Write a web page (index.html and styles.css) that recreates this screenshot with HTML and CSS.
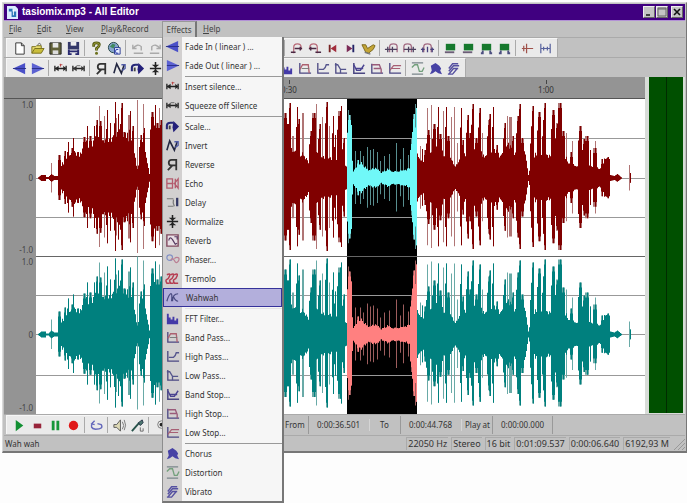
FILE: index.html
```html
<!DOCTYPE html>
<html lang="en">
<head>
<meta charset="utf-8">
<title>tasiomix.mp3 - All Editor</title>
<link rel="stylesheet" href="styles.css">
</head>
<body>
<svg class="sprite" aria-hidden="true">
  <symbol id="new" viewBox="0 0 16 16"><path d="M4 2h6l3 3v9H4z" fill="#fff" stroke="#333"/><path d="M10 2v3h3" fill="none" stroke="#333"/></symbol>
  <symbol id="open" viewBox="0 0 16 16"><path d="M2 13V6h4l1-1h5v3" fill="#e8dc70" stroke="#77701c"/><path d="M2 13l3-5h10l-3 5z" fill="#c9bd3c" stroke="#77701c"/><path d="M8 4q2-3 4 0" fill="none" stroke="#555"/></symbol>
  <symbol id="save" viewBox="0 0 16 16"><path d="M2 2h12v12H2z" fill="#62623a" stroke="#222"/><path d="M5 2h6v5H5z" fill="#e8e8e8"/><path d="M5 10h6v4H5z" fill="#ddd"/></symbol>
  <symbol id="saveas" viewBox="0 0 16 16"><path d="M2 1h12v8H2z" fill="#333768"/><path d="M5 1h6v4H5z" fill="#eee"/><path d="M3 11h10M3 9v5h3M13 9v5h-3" stroke="#292a70" stroke-width="2" fill="none"/></symbol>
  <symbol id="help" viewBox="0 0 16 16"><path d="M5 6V4q0-2 3-2t3 2q0 2-3 4v2" fill="none" stroke="#555a16" stroke-width="3"/><path d="M5 5V4q0-2 3-2t3 2q0 2-3 4v2" fill="none" stroke="#a4a83a"/><circle cx="8" cy="13" r="1.6" fill="#6d721e"/></symbol>
  <symbol id="globe" viewBox="0 0 16 16"><circle cx="7" cy="7" r="5.5" fill="#86a4cc" stroke="#244"/><path d="M3 6l3-3 3 1-2 4z" fill="#3f8a5e"/><path d="M8 7h6v7H8z" fill="#e6edff" stroke="#2b3c92"/><path d="M12 9q-3-1-3 2t3 2" fill="none" stroke="#1d2fa8"/></symbol>
  <symbol id="undo" viewBox="0 0 16 16"><path d="M3 4v4h4M3 8q5-6 9-2v4M4 13h10" fill="none" stroke="#aaa" stroke-width="1.5"/></symbol>
  <symbol id="redo" viewBox="0 0 16 16"><path d="M13 4v4H9M13 8q-5-6-9-2v4M2 13h10" fill="none" stroke="#aaa" stroke-width="1.5"/></symbol>
  <symbol id="jumpl" viewBox="0 0 16 16"><path d="M5 13V7q0-4 4-4t4 4v2" fill="none" stroke="#b86a78" stroke-width="1.3"/><path d="M2 12h5M6 8h8M12 6v4" stroke="#4b2944" stroke-width="1.5"/></symbol>
  <symbol id="jumpr" viewBox="0 0 16 16"><path d="M11 13V7q0-4-4-4T3 7v2" fill="none" stroke="#b86a78" stroke-width="1.3"/><path d="M9 12h6M2 8h8M4 6v4" stroke="#4b2944" stroke-width="1.5"/></symbol>
  <symbol id="start" viewBox="0 0 16 16"><path d="M5 4v8" stroke="#722" stroke-width="2"/><path d="M12 4v8L6 8z" fill="#a22c3c"/></symbol>
  <symbol id="end" viewBox="0 0 16 16"><path d="M11 4v8" stroke="#226" stroke-width="2"/><path d="M4 4v8l6-4z" fill="#7b2a56"/></symbol>
  <symbol id="marker" viewBox="0 0 16 16"><path d="M1 4h4l2 4 6-4 2 1-2 4-5 4-3-1z" fill="#c4a536" stroke="#7a681d"/><path d="M4 12l6 2" stroke="#7a7a7a" stroke-width="1.5"/></symbol>
  <symbol id="bracl" viewBox="0 0 16 16"><path d="M6 12V6q0-3 4-3t4 3v6" fill="none" stroke="#a36b83" stroke-width="1.4"/><path d="M1 9h13M4 6v6M9 6v6" stroke="#4d405f" stroke-width="1.4"/></symbol>
  <symbol id="bracr" viewBox="0 0 16 16"><path d="M2 12V6q0-3 4-3t4 3v6" fill="none" stroke="#a36b83" stroke-width="1.4"/><path d="M2 9h13M7 6v6M12 6v6" stroke="#4d405f" stroke-width="1.4"/></symbol>
  <symbol id="brac" viewBox="0 0 16 16"><path d="M4 12V6q0-3 4-3t4 3v6" fill="none" stroke="#a36b83" stroke-width="1.4"/><path d="M1 9h4M11 9h4M3 7v5M13 7v5M8 6v6" stroke="#46407b" stroke-width="1.4"/></symbol>
  <symbol id="flag" viewBox="0 0 16 16"><path d="M3 3h10v7H3z" fill="#16792d"/><path d="M2 12h10" stroke="#6c5e77" stroke-width="2"/></symbol>
  <symbol id="flag2" viewBox="0 0 16 16"><path d="M3 3h10v7H3z" fill="#16792d"/><path d="M4 10v3H2M12 10v3h2" fill="none" stroke="#4d4f80" stroke-width="2"/></symbol>
  <symbol id="cutl" viewBox="0 0 16 16"><path d="M2 8h12M7 3v10M4 5v6" stroke="#a0524b" stroke-width="1.3"/></symbol>
  <symbol id="cutb" viewBox="0 0 16 16"><path d="M3 3v10M13 3v10M3 8h10M6 6v4M10 6v4" stroke="#59639e" stroke-width="1.3"/></symbol>
  <symbol id="fadein" viewBox="0 0 16 16"><path d="M1 8l13-6v12z" fill="#4a50c8"/><path d="M1 8h14" stroke="#292e88"/></symbol>
  <symbol id="fadeout" viewBox="0 0 16 16"><path d="M15 8L2 2v12z" fill="#5c62d2"/><path d="M2 8h13" stroke="#292e88"/></symbol>
  <symbol id="insert" viewBox="0 0 16 16"><path d="M2 5v6M14 5v6M2 8h12" stroke="#222" stroke-width="1.4"/><path d="M2 8l4-3v6zM14 8l-3-3v6z" fill="#222"/><path d="M7 4h3M8 3v3" stroke="#b44" /></symbol>
  <symbol id="squeeze" viewBox="0 0 16 16"><path d="M2 5v6M14 5v6M2 8h12" stroke="#222" stroke-width="1.4"/><path d="M2 8l4-3v6zM14 8l-3-3v6z" fill="#333"/><path d="M6 5h4" stroke="#666"/></symbol>
  <symbol id="scale" viewBox="0 0 16 16"><path d="M2 11V7q0-3 4-3h3" fill="none" stroke="#262878" stroke-width="2.2"/><path d="M9 2l6 6-6 6-1-5z" fill="#24207a"/><path d="M5 7v4" stroke="#444" stroke-width="2"/></symbol>
  <symbol id="invert" viewBox="0 0 16 16"><path d="M2 13L5 3l5 10 3-9" fill="none" stroke="#222640" stroke-width="1.7"/><path d="M10 4h4v4l-3 2" fill="none" stroke="#505ba7" stroke-width="1.4"/></symbol>
  <symbol id="reverse" viewBox="0 0 16 16"><path d="M12 14V3H7Q4 3 4 6t3 3h5M8 9l-5 5" fill="none" stroke="#333" stroke-width="1.9"/></symbol>
  <symbol id="echo" viewBox="0 0 16 16"><path d="M2 3h6v10H2zM2 8h7M14 3l-4 5 4 5zM11 3v10" fill="none" stroke="#b45b6d" stroke-width="1.4"/></symbol>
  <symbol id="delay" viewBox="0 0 16 16"><path d="M2 4h7M3 12h6M9 5q-1 4 1 7" fill="none" stroke="#777" stroke-width="1.3"/><path d="M13 3v9" stroke="#333763" stroke-width="2.4"/></symbol>
  <symbol id="normalize" viewBox="0 0 16 16"><path d="M2 8h12M8 1v14" stroke="#222" stroke-width="1.6"/><path d="M4 4h8L8 7zM4 12h8L8 9z" fill="#222"/></symbol>
  <symbol id="reverb" viewBox="0 0 16 16"><path d="M2 2h12v12H2z" fill="#e8dfe5" stroke="#814b60" stroke-width="1.5"/><path d="M4 8q1-5 4-1l3 5 2-1M10 4h3v3" fill="none" stroke="#55385f" stroke-width="1.3"/></symbol>
  <symbol id="phaser" viewBox="0 0 16 16"><circle cx="5" cy="6" r="3" fill="none" stroke="#8190c4" stroke-width="1.3"/><path d="M6 9q2-4 4 0t4 1 0-4-4 1" fill="none" stroke="#ba7e92" stroke-width="1.3"/></symbol>
  <symbol id="tremolo" viewBox="0 0 16 16"><path d="M2 4q4-2 3 1t-3 4 0 4h3M6 4q4-2 3 1t-3 4 0 4h3M10 4q4-2 3 1t-3 4 0 4h4" fill="none" stroke="#b63e52" stroke-width="1.6"/></symbol>
  <symbol id="wahwah" viewBox="0 0 16 16"><path d="M2 12Q4 5 6 4t1 8M8 12q0-8 6-8M9 7q2 5 5 5" fill="none" stroke="#494a81" stroke-width="1.3"/></symbol>
  <symbol id="fft" viewBox="0 0 16 16"><path d="M2 3h2v4h2v2h2V6h2v4h2V8h2v6H2z" fill="#443aa8"/></symbol>
  <symbol id="bandpass" viewBox="0 0 16 16"><path d="M3 2v11h12" fill="none" stroke="#4b4782" stroke-width="1.4"/><path d="M3 9l3-5h6l1 9" fill="none" stroke="#ad6070" stroke-width="1.4"/><path d="M5 8h8" stroke="#777"/></symbol>
  <symbol id="highpass" viewBox="0 0 16 16"><path d="M3 2v11h12" fill="none" stroke="#4b4782" stroke-width="1.4"/><path d="M4 9h5q2-1 3-5h3" fill="none" stroke="#55558d" stroke-width="1.4"/></symbol>
  <symbol id="lowpass" viewBox="0 0 16 16"><path d="M3 2v11h12" fill="none" stroke="#4b4782" stroke-width="1.4"/><path d="M2 4h3l3 5h6M8 9v4" fill="none" stroke="#55558d" stroke-width="1.4"/></symbol>
  <symbol id="bandstop" viewBox="0 0 16 16"><path d="M3 2v11h12" fill="none" stroke="#4b4782" stroke-width="1.6"/><path d="M3 4l3 6h4l4-6M5 8h8" fill="none" stroke="#4a4391" stroke-width="1.5"/></symbol>
  <symbol id="highstop" viewBox="0 0 16 16"><path d="M3 3v10h12" fill="none" stroke="#4b4782" stroke-width="1.4"/><path d="M3 4h8l2 5v4M5 8h8" fill="none" stroke="#9a5b7a" stroke-width="1.4"/></symbol>
  <symbol id="lowstop" viewBox="0 0 16 16"><path d="M3 2v11h12" fill="none" stroke="#4b4782" stroke-width="1.4"/><path d="M3 10l4-5h8M5 8h9" fill="none" stroke="#a75f74" stroke-width="1.3"/></symbol>
  <symbol id="chorus" viewBox="0 0 16 16"><path d="M3 5l5-3 4 3 2 3-1 2 2 4-4-1-3-2-3 2-3 1 2-4z" fill="#4742a5"/></symbol>
  <symbol id="distortion" viewBox="0 0 16 16"><path d="M2 2h12M2 14h12" stroke="#7a858a" stroke-width="1.2"/><path d="M2 7l3-3h3l2 7h3l2-4" fill="none" stroke="#73a07c" stroke-width="1.4"/></symbol>
  <symbol id="vibrato" viewBox="0 0 16 16"><path d="M3 8l4-5h6M3 11l5-6h6M3 14l5-6h5M2 14h5l5-6" fill="none" stroke="#5550a0" stroke-width="1.5"/></symbol>
  <symbol id="play" viewBox="0 0 16 16"><path d="M4 2v12l8-6z" fill="#129033"/></symbol>
  <symbol id="stop" viewBox="0 0 16 16"><path d="M4 6h8v5H4z" fill="#97243a"/></symbol>
  <symbol id="pause" viewBox="0 0 16 16"><path d="M4 3h3v10H4zM9 3h3v10H9z" fill="#16963a"/></symbol>
  <symbol id="rec" viewBox="0 0 16 16"><circle cx="8" cy="8" r="5" fill="#e01818"/></symbol>
  <symbol id="loop" viewBox="0 0 16 16"><path d="M4 5q-4 6 3 7 9 0 6-5l-4-1M6 3L3 6l3 1" fill="none" stroke="#6468bb" stroke-width="1.5"/></symbol>
  <symbol id="speaker" viewBox="0 0 16 16"><path d="M2 7h3l4-5v12L5 10H2z" fill="#ddd9b5" stroke="#555"/><path d="M11 4q3 4 0 8M13 2q3 6 0 11" fill="none" stroke="#777"/></symbol>
  <symbol id="mic" viewBox="0 0 16 16"><path d="M2 14l8-9" stroke="#27524a" stroke-width="2"/><path d="M9 5l4-3 1 3-3 3z" fill="#4d7770" stroke="#234"/><path d="M11 10v4h3v-3" fill="none" stroke="#666"/></symbol>
  <symbol id="zoom" viewBox="0 0 16 16"><circle cx="9" cy="7" r="4" fill="none" stroke="#777"/><circle cx="9" cy="7" r="2" fill="#222"/></symbol>
</svg>

<main class="window">
  <header class="titlebar">
    <svg class="logo" viewBox="0 0 12 14" aria-hidden="true"><path d="M0 0h9l3 3v11H0z" fill="#dcecff"/><path d="M2 3h4v3H2zM5 6h5v6H5z" fill="#2b77b8"/><path d="M7 4v6" stroke="#fff"/></svg>
    <h1>tasiomix.mp3 - All Editor</h1>
    <div class="controls">
      <button aria-label="Minimize"><svg viewBox="0 0 10 10"><path d="M2 8h4" stroke="#222" stroke-width="1.6"/></svg></button>
      <button aria-label="Maximize"><svg viewBox="0 0 10 10"><path d="M1 1h8v8H1zM1 2h8" fill="none" stroke="#666"/></svg></button>
      <button class="close" aria-label="Close"><svg viewBox="0 0 10 10"><path d="M2 2l6 6M8 2L2 8" stroke="#111" stroke-width="1.6"/></svg></button>
    </div>
  </header>

  <nav class="menubar" aria-label="Main menu">
    <button class="m-file"><u>F</u>ile</button>
    <button class="m-edit"><u>E</u>dit</button>
    <button class="m-view"><u>V</u>iew</button>
    <button class="m-play"><u>P</u>lay&amp;Record</button>
    <div class="open-menu">
      <button class="effects" aria-expanded="true">Effects</button>
      <div class="dropdown" id="effects-menu" role="menu"></div>
    </div>
    <button class="m-help"><u>H</u>elp</button>
  </nav>

  <div class="band"><div class="toolbar" role="toolbar" aria-label="Standard" data-icons="new open save saveas | help globe | undo redo save new | zoom zoom | start end | jumpl jumpr start end marker | bracl bracr brac | flag flag flag2 flag2 | cutl cutb"></div></div>
  <div class="band"><div class="toolbar" role="toolbar" aria-label="Effects" data-icons="fadein fadeout | insert squeeze | reverse invert scale normalize echo delay | reverb phaser tremolo wahwah fft bandpass highpass lowpass bandstop highstop lowstop | distortion chorus vibrato"></div></div>

  <section class="editor">
    <div class="view">
      <div class="ruler"><span class="half">0:30</span><span class="full">1:00</span></div>
      <div class="axis"><span>1.0</span><span>0</span><span>-1.0</span></div>
      <div class="axis"><span>1.0</span><span>0</span><span>-1.0</span></div>
      <svg class="wave" id="wave" viewBox="36 99 609 315" preserveAspectRatio="none" role="img" aria-label="Stereo waveform"></svg>
    </div>
    <div class="meter"><span></span><span></span></div>
  </section>

  <div class="band transport">
    <div class="toolbar" role="toolbar" aria-label="Transport" data-icons="play stop pause rec | loop | speaker mic | zoom zoom zoom zoom zoom zoom zoom"></div>
    <div class="times">
      <span class="name">From</span><output>0:00:36.501</output>
      <span class="name to">To</span><output>0:00:44.768</output>
      <span class="name">Play at</span><output>0:00:00.000</output>
    </div>
  </div>

  <footer class="status">
    <span class="hint">Wah wah</span>
    <span>22050 Hz</span><span>Stereo</span><span>16 bit</span><span>0:01:09.537</span><span>0:00:06.640</span><span>6192,93 M</span>
    <svg class="grip" viewBox="0 0 12 12" aria-hidden="true"><path d="M1 12L12 1M5 12l7-7M9 12l3-3" stroke="#999"/></svg>
  </footer>
</main>
<script src="app.js"></script>
</body>
</html>
```
FILE: styles.css
```css
* { box-sizing: border-box; }

html { background: #fdfdfd; }

body {
  min-height: 100vh;
  margin: 0;
  padding: 2px 0 0 2px;
  color: #333;
  font: 8px/12px "Noto Sans", "DejaVu Sans", sans-serif;
}

button {
  margin: 0;
  padding: 0;
  border: 0;
  background: none;
  color: inherit;
  font: inherit;
}

svg { display: block; }
.sprite { position: absolute; width: 0; height: 0; }

.window {
  padding: 1px 1px 0;
  border: 1px solid #d8d8d8;
  border-right-color: #777;
  border-bottom: 2px solid #777;
  background: #c1c1c1;
}

.titlebar {
  display: flex;
  align-items: center;
  height: 17px;
  padding: 0 2px 0 3px;
  border-bottom: 1px solid #b391d6;
  background: #400080;
  color: #fff;
}
.logo { width: 11px; height: 13px; }
.titlebar h1 {
  flex: 1;
  margin: 0 0 0 4px;
  font: bold 10px/14px "Liberation Sans", sans-serif;
}
.controls { display: flex; gap: 1px; }
.controls button {
  width: 12px;
  height: 12px;
  border: 1px solid #eee;
  border-color: #eee #666 #666 #eee;
  background: #c4c4c4;
}
.controls .close { margin-left: 2px; }

.menubar {
  display: flex;
  height: 16px;
  padding-left: 5px;
  color: #444;
}
.menubar > button { text-align: left; white-space: nowrap; }
.m-file { width: 28px; }
.m-edit { width: 29px; }
.m-view { width: 35px; }
.m-play { width: 61px; }
.open-menu { position: relative; width: 41px; }
.effects {
  width: 35px;
  height: 16px;
  border: 1px solid #999;
  border-right: 2px solid #777;
  border-bottom: 0;
  background: #c9c9c9;
}

.dropdown {
  position: absolute;
  z-index: 2;
  top: 16px;
  left: 0;
  width: 122px;
  border: 1px solid #8d8d8d;
  border-top: 0;
  border-right: 2px solid #777;
  border-bottom: 2px solid #777;
  background: linear-gradient(90deg, #d2d0d0 19px, #f6f6f6 19px);
}
.dropdown button {
  display: grid;
  grid-template-columns: 19px 1fr;
  align-items: center;
  column-gap: 3px;
  width: 100%;
  height: 19px;
  border: 1px solid transparent;
  border-left: 0;
  color: #333;
  text-align: left;
  white-space: nowrap;
}
.dropdown button svg { width: 15px; height: 15px; margin-left: 2px; }
.dropdown .selected { border: 1px solid #35329a; background: #b3afdc; }
.dropdown .selected svg { margin-left: 1px; }
.dropdown hr {
  height: 2px;
  margin: 0 0 0 22px;
  border: 0;
  border-bottom: 1px solid #999;
}
.dropdown hr.faint { border-color: #e4e4e4; }

.band {
  display: flex;
  height: 20px;
  padding-left: 2px;
  border-top: 1px solid #aaa;
}
.toolbar {
  display: flex;
  align-items: center;
  height: 19px;
  padding: 0 3px;
  border: 1px solid #f6f6f6;
  border-width: 1px 0 0 1px;
  border-right: 1px solid #aaa;
  background: #eaeaea;
}
.toolbar button {
  display: grid;
  place-items: center;
  width: 18px;
  height: 17px;
}
.toolbar button svg { width: 15px; height: 15px; }
.toolbar i {
  width: 1px;
  height: 16px;
  margin: 0 2px;
  background: #aaa;
}

.editor { display: flex; }
.view {
  flex: 1;
  display: grid;
  grid-template: 22px 157px 158px / 32px 1fr;
  background: #949494;
}
.ruler {
  grid-column: 1 / 3;
  display: grid;
  grid-template-columns: 265fr 40px 217fr 40px 79fr;
  border-bottom: 1px solid #555;
  color: #333;
  text-align: center;
}
.ruler span { padding-top: 6px; line-height: 14px; background: linear-gradient(#444, #444) 50% 3px / 1px 4px no-repeat; }
.half { grid-column: 2; }
.full { grid-column: 4; }
.axis {
  grid-column: 1;
  display: flex;
  flex-direction: column;
  justify-content: space-between;
  align-items: flex-end;
  padding-right: 3px;
  color: #444;
}
.wave {
  grid-area: 2 / 2 / 4 / 3;
  width: 100%;
  height: 315px;
  background: #fff;
}
.grid { stroke: #999; stroke-width: 1; }
.middle { stroke: #666; stroke-width: 1; }

.meter {
  display: flex;
  gap: 1px;
  width: 40px;
  padding: 0 2px 1px 4px;
  background: #d8dcd8;
}
.meter span { flex: 1; background: #005000; }
.meter span + span { box-shadow: -1px 0 #002c00; }

.transport { height: 21px; }
.times { display: flex; align-items: center; }
.times output {
  width: 61px;
  padding-left: 8px;
  border-left: 1px solid #999;
  line-height: 18px;
}
.times .name { width: 31px; padding-left: 3px; border-left: 1px solid #d5d5d5; white-space: nowrap; }
.times .name:first-child { width: 27px; }
.times output:last-child { border-right: 1px solid #999; }
.times .to { padding-left: 10px; }

.status {
  display: flex;
  align-items: center;
  gap: 3px;
  height: 16px;
  border-top: 1px solid #aaa;
}
.status span {
  padding: 0 1px;
  border-left: 1px solid #aaa;
  border-top: 1px solid #aaa;
  font-size: 9px;
  white-space: nowrap;
}
.status .hint { flex: 1; border: 0; font-size: 8px; }
.grip { width: 12px; height: 12px; }
```
FILE: app.js
```js
const icon = id => `<svg aria-hidden="true"><use href="#${id}"/></svg>`;

document.querySelectorAll('[data-icons]').forEach(bar => {
  bar.innerHTML = bar.dataset.icons.split(' ')
    .map(id => id === '|' ? '<i></i>' : `<button aria-label="${id}">${icon(id)}</button>`)
    .join('');
});

const items = [
  ['fadein', 'Fade In ( linear ) ...'], ['fadeout', 'Fade Out ( linear ) ...'], '-',
  ['insert', 'Insert silence...'], ['squeeze', 'Squeeze off Silence'], '-',
  ['scale', 'Scale...'], ['invert', 'Invert'], ['reverse', 'Reverse'], ['echo', 'Echo'],
  ['delay', 'Delay'], ['normalize', 'Normalize'], ['reverb', 'Reverb'], ['phaser', 'Phaser...'],
  ['tremolo', 'Tremolo'], ['wahwah', 'Wahwah'], '~',
  ['fft', 'FFT Filter...'], ['bandpass', 'Band Pass...'], ['highpass', 'High Pass...'],
  ['lowpass', 'Low Pass...'], ['bandstop', 'Band Stop...'], ['highstop', 'High Stop...'],
  ['lowstop', 'Low Stop...'], '-',
  ['chorus', 'Chorus'], ['distortion', 'Distortion'], ['vibrato', 'Vibrato']
];
document.getElementById('effects-menu').innerHTML = items.map(item => {
  if (item === '-') return '<hr>';
  if (item === '~') return '<hr class="faint">';
  const state = item[0] === 'wahwah' ? ' class="selected"' : '';
  return `<button role="menuitem"${state}>${icon(item[0])}<span>${item[1]}</span></button>`;
}).join('');

// Continuous body of the sound: time position, half height.
const body = [
  [37, 0], [41, 3], [45, 3], [46, 1], [48, 1], [51, 4], [54, 2], [57, 2], [58, 10], [62, 14], [68, 20],
  [74, 24], [80, 23], [86, 28], [92, 30], [98, 30], [104, 34], [110, 32], [114, 38], [120, 42],
  [128, 40], [132, 34], [135, 18], [137, 8], [139, 14], [144, 32], [147, 16], [149, 4], [150, 42], [162, 45],
  [180, 30], [200, 36], [220, 28], [240, 35], [265, 30], [283, 32], [290, 30], [296, 24], [303, 22], [308, 15],
  [311, 22], [316, 28], [325, 18], [330, 18], [338, 16], [343, 13], [346, 11],
  [348, 30], [351, 30], [353, 6], [357, 13], [361, 14], [367, 8], [376, 9], [381, 5], [387, 8], [394, 6],
  [402, 7], [409, 9], [412, 16], [417, 22],
  [419, 18], [424, 16], [428, 24], [434, 32], [441, 24], [449, 20], [455, 11], [462, 20], [468, 24],
  [476, 27], [484, 22], [490, 27], [500, 22], [508, 30], [516, 23], [525, 24], [528, 3], [531, 18],
  [538, 24], [545, 22], [552, 20], [562, 26], [567, 16], [576, 11], [584, 20], [592, 10], [600, 9],
  [604, 18], [609, 18], [610, 3], [614, 2], [617, 4], [622, 0], [645, 0]
];

// Peaks: position, half height, width, faint (1) or solid (0).
const peaks = [
  [51, 15, 1, 1], [59, 23, 3, 0], [65, 27, 2, 0], [68, 36, 1, 0], [72, 30, 3, 0], [73, 40, 1, 0], [78, 26, 2, 0],
  [84, 41, 3, 0], [87, 52, 1, 0], [90, 42, 3, 0], [94, 52, 1, 0], [97, 58, 2, 0], [99, 72, 1, 1], [100, 57, 3, 0],
  [104, 62, 1, 1], [107, 68, 1, 0], [110, 55, 1, 0], [115, 76, 1, 0], [116, 60, 2, 1], [118, 64, 1, 0], [122, 75, 2, 0],
  [124, 46, 3, 0], [129, 63, 2, 1], [130, 67, 1, 0], [133, 52, 2, 0], [137, 78, 1, 1], [141, 43, 2, 0], [143, 74, 1, 1],
  [144, 50, 2, 0], [152, 66, 3, 0], [155, 73, 1, 0], [157, 55, 5, 0], [159, 70, 1, 1], [161, 58, 3, 0],
  [170, 60, 4, 0], [182, 70, 3, 0], [195, 65, 3, 0], [207, 74, 3, 0], [220, 62, 4, 0], [236, 70, 3, 0], [251, 64, 3, 0], [268, 72, 3, 0],
  [285, 65, 3, 0], [287, 54, 5, 0], [290, 75, 2, 0], [293, 42, 2, 1], [297, 71, 1, 0], [299, 59, 2, 0], [303, 65, 2, 1],
  [311, 47, 3, 0], [314, 65, 4, 0], [316, 74, 1, 1], [320, 54, 2, 0], [322, 61, 1, 1], [327, 76, 2, 0], [329, 52, 1, 1],
  [333, 62, 1, 0], [335, 43, 1, 0], [340, 67, 4, 0], [341, 72, 1, 0], [344, 40, 2, 0],
  [348, 68, 1, 1], [349, 63, 3, 0], [351, 53, 2, 0], [355, 27, 1, 1], [358, 18, 2, 0], [360, 27, 1, 1], [363, 22, 1, 1],
  [367, 31, 1, 1], [370, 28, 1, 1], [373, 29, 1, 1], [377, 26, 1, 1], [380, 17, 1, 1], [384, 22, 1, 1], [389, 24, 1, 1],
  [396, 35, 1, 1], [400, 19, 1, 1], [403, 30, 1, 1], [408, 23, 1, 1], [412, 39, 2, 0], [414, 64, 2, 0], [415, 74, 1, 1], [416, 70, 1, 0],
  [420, 32, 1, 1], [422, 29, 1, 0], [425, 28, 2, 0], [427, 70, 1, 1], [428, 48, 3, 0], [431, 73, 1, 1], [434, 54, 3, 0],
  [438, 71, 1, 0], [440, 44, 3, 0], [443, 67, 1, 1], [446, 71, 1, 0], [448, 42, 4, 0], [451, 61, 1, 1], [454, 71, 1, 1],
  [457, 35, 1, 1], [461, 70, 1, 0], [463, 38, 2, 0], [468, 63, 2, 0], [470, 45, 2, 0], [473, 74, 2, 0], [476, 40, 3, 0],
  [480, 70, 2, 0], [482, 45, 1, 1], [489, 58, 2, 0], [490, 64, 2, 0], [493, 71, 1, 0], [497, 33, 2, 0],
  [505, 55, 2, 0], [507, 62, 1, 1], [510, 61, 3, 1], [513, 42, 2, 0], [518, 62, 3, 0], [520, 74, 2, 0], [522, 40, 3, 0],
  [532, 48, 3, 0], [533, 72, 2, 0], [539, 66, 3, 0], [543, 58, 1, 0], [545, 75, 2, 0], [551, 32, 1, 0], [553, 68, 3, 0],
  [558, 55, 4, 0], [560, 75, 4, 0], [563, 47, 3, 0], [566, 45, 1, 1], [571, 26, 3, 0], [572, 37, 1, 1],
  [580, 52, 3, 0], [584, 39, 2, 0], [587, 42, 4, 0], [590, 28, 1, 0], [595, 30, 4, 0], [595, 37, 1, 1],
  [602, 19, 2, 0], [605, 17, 2, 0], [608, 21, 2, 0], [629, 13, 1, 1], [630, 5, 1, 0]
];

function bodyAt(x) {
  const k = body.findIndex(p => p[0] >= x);
  if (k <= 0) return 0;
  const [x0, a0] = body[k - 1], [x1, a1] = body[k];
  const a = a0 + (a1 - a0) * (x - x0) / (x1 - x0);
  const rough = a > 5 ? 0.9 + 0.28 * Math.abs(Math.sin(x * 12.9898) * 43758.5453 % 1) : 1;
  return a * rough;
}

function channel(center, from, to, solid, faint) {
  let light = '', dark = '';
  const column = (x, w, a) => {
    const left = Math.max(from, x), right = Math.min(to, x + w);
    return right > left ? `M${left} ${center - a}H${right}V${center + a * 0.96}H${left}z` : '';
  };
  for (let x = from; x < to; x++) {
    const a = bodyAt(x);
    if (a > 0.2) dark += column(x, 1, a);
  }
  for (const [x, a, w, soft] of peaks) {
    if (x < from || x >= to) continue;
    const left = x - (w >> 1);
    if (soft) {
      light += column(left, w, a);
    } else {
      // A peak widens towards the body and ends in a thin, faint tip.
      light += column(left, w, a);
      dark += column(left, w, w > 1 ? a - 5 : a);
      if (a > 35) dark += column(left - 1, w + 1, a * 0.72);
      if (w > 1) dark += column(x, 1, a);
    }
  }
  return `<path d="${light}" fill="${faint}"/><path d="${dark}" fill="${solid}"/>`;
}

const lines = [138, 178, 217, 295, 334, 375]
  .map(y => `<path class="grid" d="M36 ${y}.5H645"/>`).join('');
document.getElementById('wave').innerHTML =
  '<path d="M347 99h70v315h-70z" fill="#000"/>' + lines +
  '<path class="middle" d="M36 256.5H645"/>' +
  [[36, 347], [417, 645]].map(([a, b]) =>
    channel(178, a, b, '#800000', '#b07575') + channel(334.5, a, b, '#00807e', '#69aaa7')).join('') +
  channel(178, 347, 417, '#70f8f8', '#588f90') +
  channel(334.5, 347, 417, '#ff8080', '#9d5d5d');
```
